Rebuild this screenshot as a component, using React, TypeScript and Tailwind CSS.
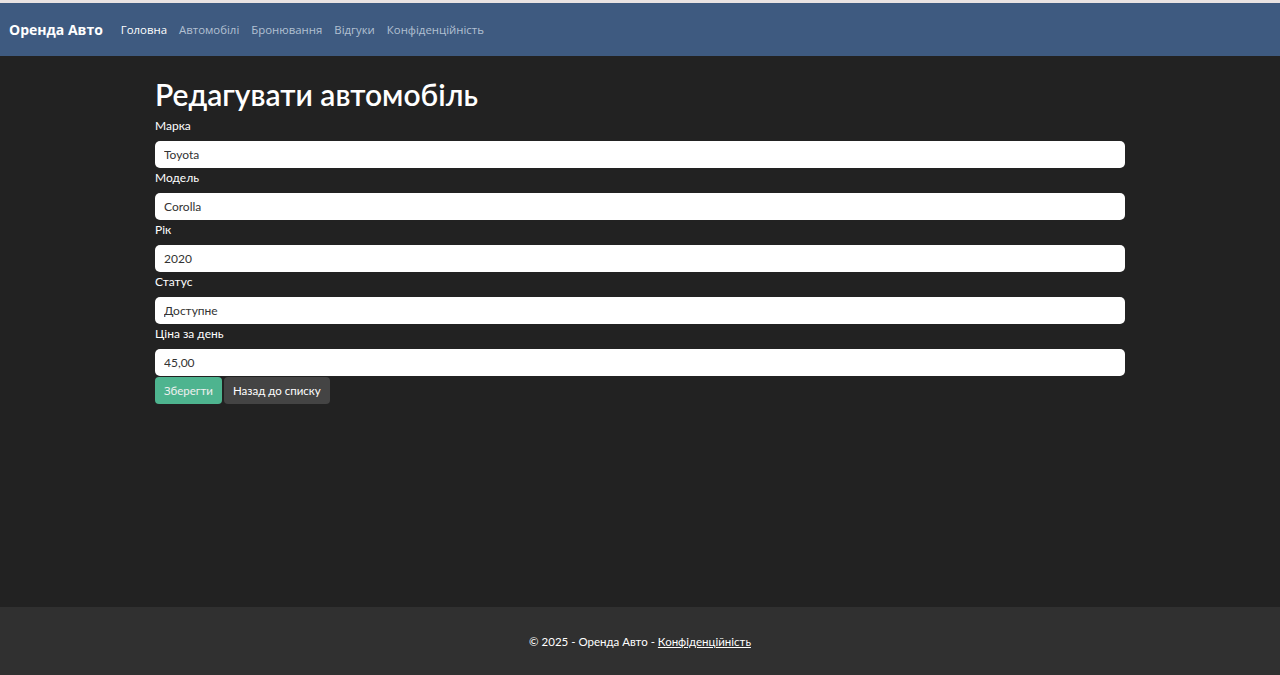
export default function App() {
  const fields = [
    { label: "Марка", value: "Toyota" },
    { label: "Модель", value: "Corolla" },
    { label: "Рік", value: "2020" },
    { label: "Статус", value: "Доступне" },
    { label: "Ціна за день", value: "45,00" },
  ];
  const links = ["Головна", "Автомобілі", "Бронювання", "Відгуки", "Конфіденційність"];

  return (
    <div className="flex min-h-[675px] flex-col bg-[#222222] font-['Lato',sans-serif] text-white">
      <div className="h-[3px] bg-[#e9e3e3]" />
      <nav className="flex h-[53px] items-center bg-[#3e5a80] px-[9px] font-['Open_Sans',sans-serif]">
        <span className="mr-[18px] text-[14px] font-bold">Оренда Авто</span>
        <div className="flex gap-[12px] text-[11.4px]">
          {links.map((l, i) => (
            <a key={l} className={i === 0 ? "text-white" : "text-[#b2c0d2]"}>
              {l}
            </a>
          ))}
        </div>
      </nav>
      <main className="mx-auto w-full max-w-[1000px] flex-1 px-[15px] pt-[16px]">
        <h1 className="text-[30px] leading-[44px] font-semibold">Редагувати автомобіль</h1>
        <form onSubmit={(e) => e.preventDefault()}>
          {fields.map((f) => (
            <div key={f.label}>
              <label className="block h-[25px] pt-[2px] text-[12px] leading-[16px]">{f.label}</label>
              <input
                defaultValue={f.value}
                className="block h-[27px] w-full rounded-[5px] bg-white px-[9px] text-[12px] text-[#333] outline-none"
              />
            </div>
          ))}
          <div className="mt-[1px] flex gap-[2px]">
            <button className="h-[27px] rounded-[4px] bg-[#4eb48f] px-[9px] text-[11.5px] text-[#f0f0f0]">
              Зберегти
            </button>
            <button className="h-[27px] rounded-[4px] bg-[#444444] px-[9px] text-[11.5px] text-white">
              Назад до списку
            </button>
          </div>
        </form>
      </main>
      <footer className="flex h-[68px] items-center justify-center bg-[#303030] pt-[2px] text-[11.5px] text-white">
        <span>
          © 2025 - Оренда Авто - <a className="underline">Конфіденційність</a>
        </span>
      </footer>
    </div>
  );
}
